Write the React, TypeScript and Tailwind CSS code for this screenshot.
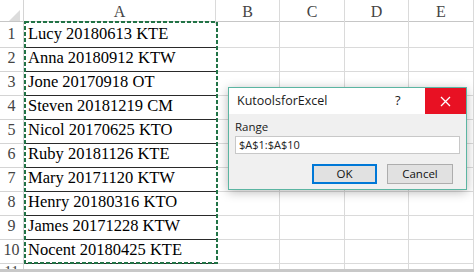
const rows = [
  'Lucy 20180613 KTE',
  'Anna 20180912 KTW',
  'Jone 20170918 OT',
  'Steven 20181219 CM',
  'Nicol 20170625 KTO',
  'Ruby 20181126 KTE',
  'Mary 20171120 KTW',
  'Henry 20180316 KTO',
  'James 20171228 KTW',
  'Nocent 20180425 KTE',
];

const cols = ['B', 'C', 'D', 'E'];
const grid = 'grid grid-cols-[24px_192px_64px_65px_64px_65px]';
const serif = "font-['Liberation_Serif','Times_New_Roman',serif]";
const ui = "font-['Open_Sans','Noto_Sans',sans-serif]";

function Dialog() {
  return (
    <div className="absolute left-[228px] top-[87px] flex h-[103px] w-[239px] flex-col border border-[#5bb5a2] bg-[#f0f0f0] shadow-[0_2px_10px_rgba(0,0,0,0.28)]">
      <div className="flex h-[26px] items-center bg-white">
        <span className={`${ui} flex-1 pl-[8px] text-[12.5px] text-[#1a1a1a]`}>KutoolsforExcel</span>
        <span className={`${ui} w-[30px] text-[13px] text-[#222]`}>?</span>
        <div className="flex h-full w-[41px] items-center justify-center bg-[#e81123]">
          <svg width="11" height="11" viewBox="0 0 11 11">
            <path d="M1 1L10 10M10 1L1 10" stroke="#fff" strokeWidth="1.3" />
          </svg>
        </div>
      </div>
      <div className="flex flex-col px-[6px] pt-[6px]">
        <span className={`${ui} text-[11.5px] leading-[14px] text-[#1a1a1a]`}>Range</span>
        <div className={`${ui} mt-[2px] flex h-[18px] w-[225px] items-center border border-[#c8c8c8] bg-white pl-[3px] text-[11px] text-[#222]`}>
          $A$1:$A$10
        </div>
        <div className="mt-[10px] flex justify-end gap-[10px] pr-[7px]">
          <div className={`${ui} flex h-[20px] w-[65px] items-center justify-center border-2 border-[#0078d7] bg-[#e1e1e1] text-[11.5px] text-[#111]`}>
            OK
          </div>
          <div className={`${ui} flex h-[20px] w-[66px] items-center justify-center border border-[#adadad] bg-[#e1e1e1] text-[11.5px] text-[#111]`}>
            Cancel
          </div>
        </div>
      </div>
    </div>
  );
}

export default function App() {
  return (
    <div className="relative h-[272px] w-[474px] overflow-hidden bg-white">
      <div className={`${grid} h-[22px] border-b border-[#c6c6c6]`}>
        <div className="relative border-r border-[#d4d4d4]">
          <div className="absolute bottom-[3px] right-[3px] h-0 w-0 border-b-[11px] border-l-[11px] border-b-[#dcdcdc] border-l-transparent" />
        </div>
        {['A', ...cols].map((c) => (
          <div key={c} className={`${serif} flex items-center justify-center border-r border-[#dadada] text-[16px] text-[#444]`}>
            {c}
          </div>
        ))}
      </div>
      {rows.map((r, i) => (
        <div key={r} className={`${grid} h-[24px]`}>
          <div className={`${serif} flex items-center justify-center border-b border-r border-[#d4d4d4] text-[16px] text-[#444]`}>
            {i + 1}
          </div>
          <div className={`${serif} flex items-center border-b border-[#2a2a2a] pl-[4px] text-[16.5px] text-black`}>{r}</div>
          {cols.map((c) => (
            <div key={c} className="border-b border-r border-[#dadada]" />
          ))}
        </div>
      ))}
      <div className={`${grid} h-[7px] overflow-hidden`}>
        <div className={`${serif} border-r border-[#d4d4d4] pt-[2px] text-center text-[15px] leading-[15px] text-[#444]`}>11</div>
        <div />
        {cols.map((c) => (
          <div key={c} className="border-r border-[#dadada]" />
        ))}
      </div>
      <div className="h-[3px] bg-[#c8c8c8]" />

      <svg className="absolute left-[24px] top-[21px]" width="194" height="243">
        <rect x="1" y="1" width="192" height="241" fill="none" stroke="#217346" strokeWidth="2" strokeDasharray="4 2" />
      </svg>

      <Dialog />
    </div>
  );
}
